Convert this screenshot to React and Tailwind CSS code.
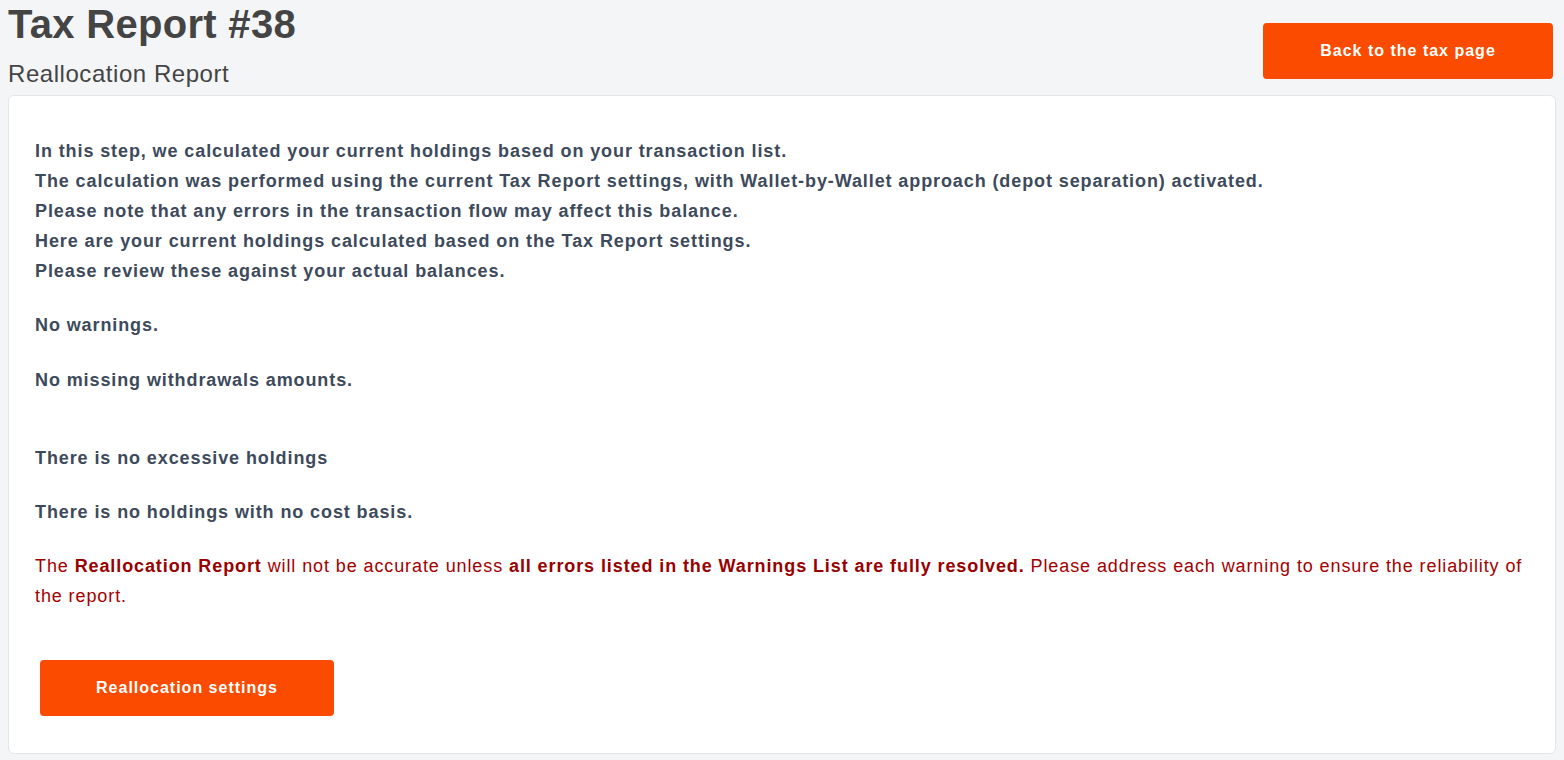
import React from 'react';

const font = { fontFamily: '"Liberation Sans", Arial, sans-serif' };

export default function App() {
  return (
    <div className="min-h-screen bg-[#f4f5f7] text-[#444]" style={font}>
      <div className="flex items-start justify-between pl-2 pr-[11px]">
        <div>
          <h1 className="text-[40px] leading-[48px] font-bold text-[#444] tracking-[0.3px]">Tax Report #38</h1>
          <h2 className="mt-[11px] text-[24px] leading-[30px] text-[#444] tracking-[0.55px]">Reallocation Report</h2>
        </div>
        <button className="mt-[23px] h-[56px] w-[290px] rounded bg-[#fa4b00] text-[16px] font-bold tracking-[1px] text-white">
          Back to the tax page
        </button>
      </div>

      <div className="mx-2 mt-[6px] rounded-md border border-[#e3e5e8] bg-white pl-[26px] pr-6 pt-[40px] pb-[37px]">
        <div className="text-[18px] leading-[30px] font-bold tracking-[0.9px] text-[#3d4a5c]">
          <p>In this step, we calculated your current holdings based on your transaction list.</p>
          <p>The calculation was performed using the current Tax Report settings, with Wallet-by-Wallet approach (depot separation) activated.</p>
          <p>Please note that any errors in the transaction flow may affect this balance.</p>
          <p>Here are your current holdings calculated based on the Tax Report settings.</p>
          <p>Please review these against your actual balances.</p>
          <p className="mt-[24px]">No warnings.</p>
          <p className="mt-[25px]">No missing withdrawals amounts.</p>
          <p className="mt-[48px]">There is no excessive holdings</p>
          <p className="mt-[24px]">There is no holdings with no cost basis.</p>
        </div>
        <p className="mt-[24px] text-[18px] leading-[30px] tracking-[0.9px] text-[#a30000]">
          The <span className="font-bold text-[#990000]">Reallocation Report</span> will not be accurate unless{' '}
          <span className="font-bold text-[#990000]">all errors listed in the Warnings List are fully resolved.</span> Please address each warning to ensure the reliability of the report.
        </p>
        <button className="ml-[5px] mt-[49px] h-[56px] w-[294px] rounded bg-[#fa4b00] text-[16px] font-bold tracking-[1px] text-white">
          Reallocation settings
        </button>
      </div>
    </div>
  );
}
